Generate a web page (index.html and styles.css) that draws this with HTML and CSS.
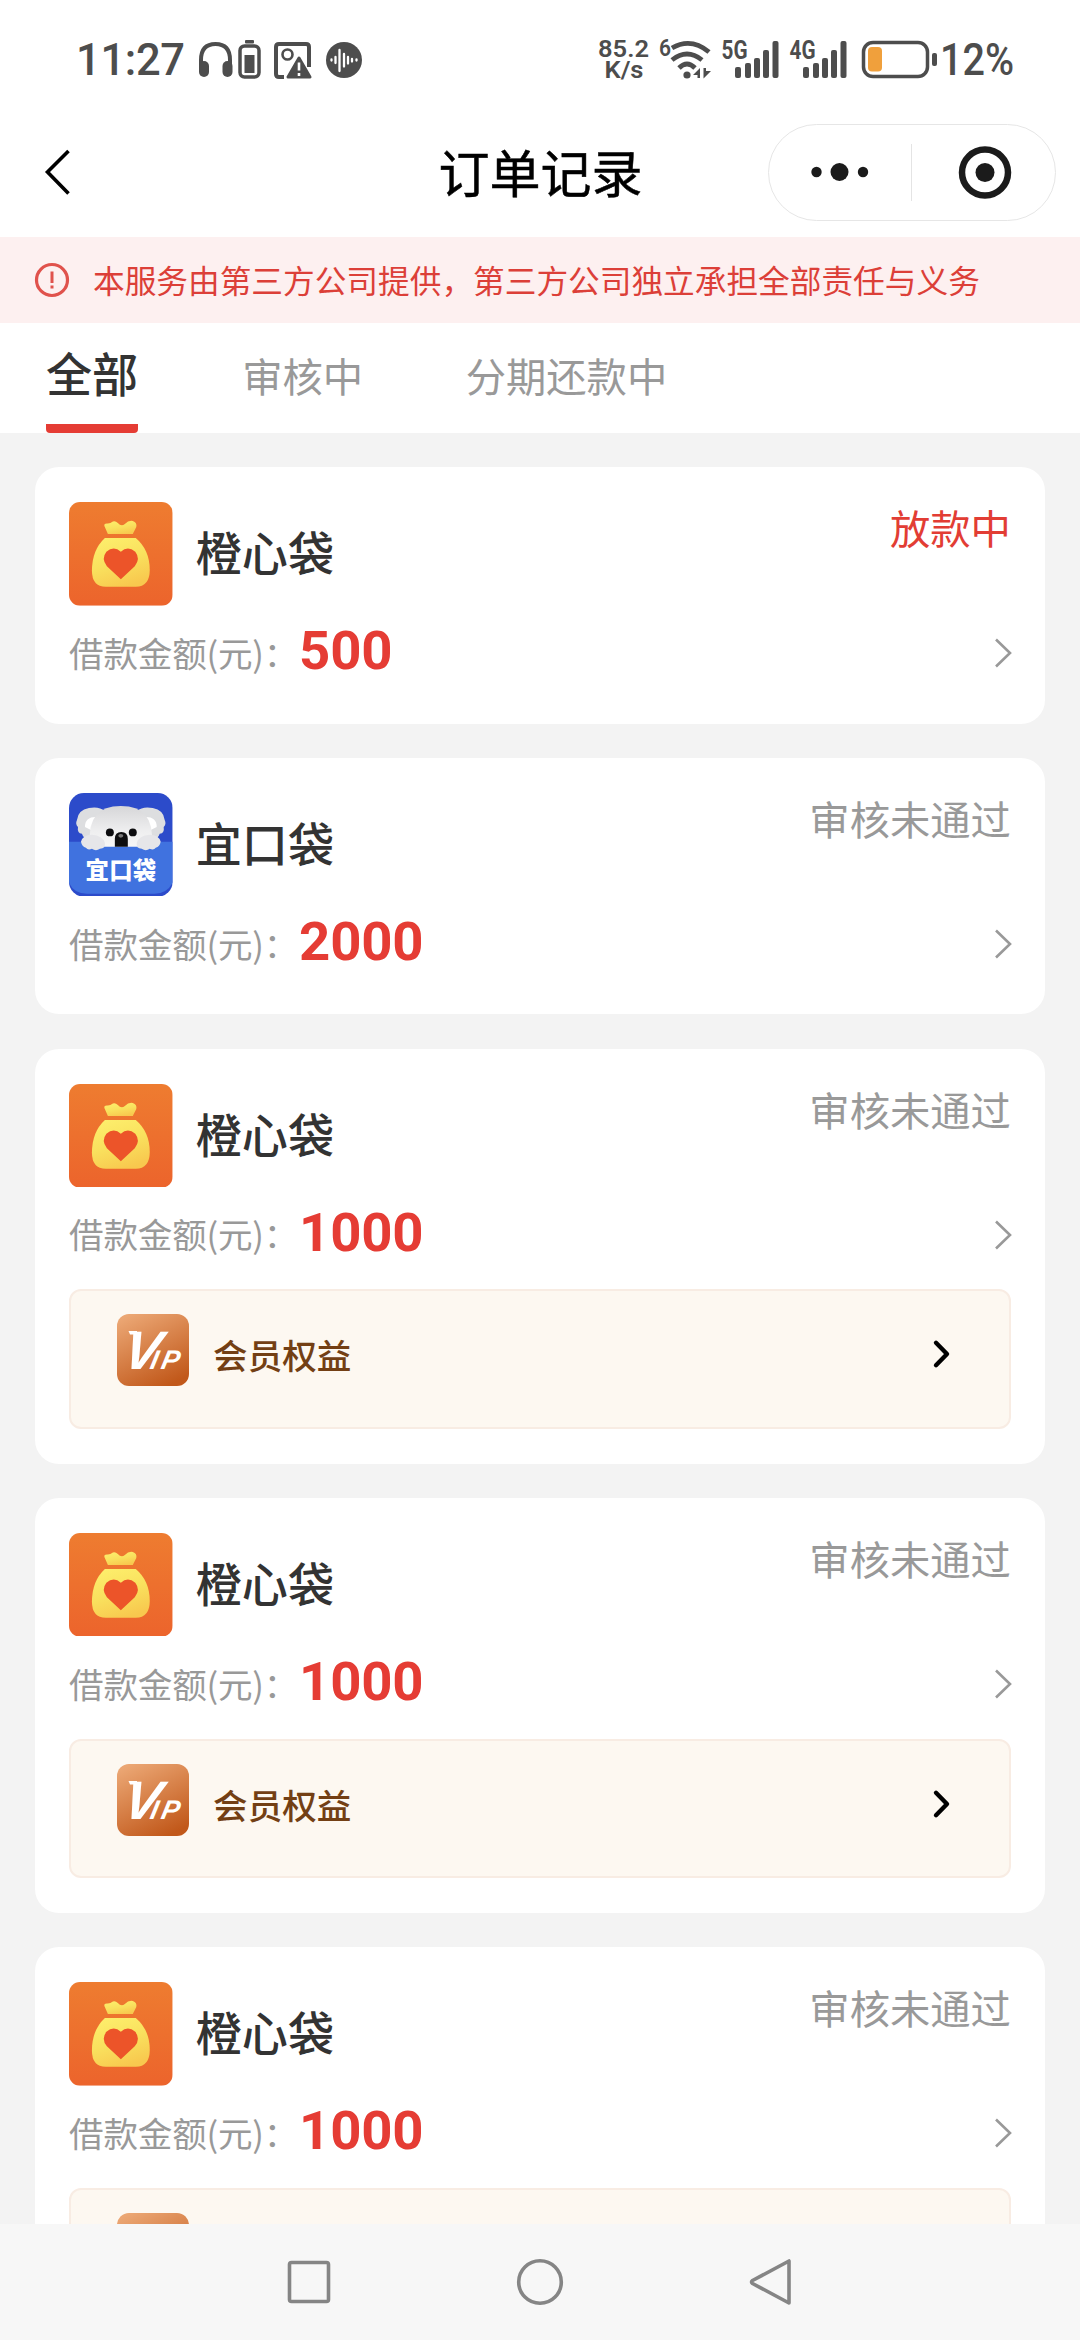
FILE: index.html
```html
<!DOCTYPE html>
<html lang="zh-CN">
<head>
<meta charset="utf-8">
<title>订单记录</title>
<link rel="stylesheet" href="styles.css">
</head>
<body>
<svg class="defs" width="0" height="0" aria-hidden="true">
  <defs>
    <linearGradient id="orange" x1="0" y1="0" x2="0" y2="1"><stop offset="0" stop-color="#ee7c30"/><stop offset="1" stop-color="#ec642c"/></linearGradient>
    <linearGradient id="gold" x1="0.2" y1="0" x2="0.6" y2="1"><stop offset="0" stop-color="#fdee6c"/><stop offset="0.5" stop-color="#f9e15e"/><stop offset="1" stop-color="#f8c84e"/></linearGradient>
    <linearGradient id="bronze" x1="0.2" y1="0" x2="0.7" y2="1"><stop offset="0" stop-color="#eba673"/><stop offset="1" stop-color="#c1581a"/></linearGradient>
    <linearGradient id="fur" x1="0" y1="0" x2="0" y2="1"><stop offset="0" stop-color="#d6d6d8"/><stop offset="0.6" stop-color="#eeeeef"/><stop offset="1" stop-color="#f7f7f7"/></linearGradient>
    <clipPath id="tile"><rect width="104" height="104" rx="15"/></clipPath>
  </defs>
  <symbol id="bag" viewBox="0 0 104 104">
    <rect width="104" height="104" rx="11" fill="url(#orange)"/>
    <path d="M39 32 L35.500 24 Q35 21.500 38 21.500 Q41 22 44 19.500 Q46.500 18.500 49 21 Q52.500 25 56 22 Q60 18 64 19 Q68.500 20.500 67.500 25 L64 32Z" fill="url(#gold)"/>
    <path d="M36 36 H67 Q81 48 81 68 Q81 85 67 85 H37 Q23 85 23 69 Q23 48 36 36Z" fill="url(#gold)"/>
    <path d="M52 77.500 L38 64.500 Q32 57 37.500 50 Q45 43.500 52 50 Q59 43.500 66.500 50 Q72 57 66 64.500Z" fill="#ec5429"/>
  </symbol>
  <symbol id="next" viewBox="0 0 20 32"><path d="M3 2.500 L17 16 L3 29.500" fill="none" stroke="#999" stroke-width="2.600"/></symbol>
  <symbol id="next-bold" viewBox="0 0 20 32"><path d="M4 4.800 L15 16 L4 27.200" fill="none" stroke="#000" stroke-width="4.400" stroke-linecap="round" stroke-linejoin="round"/></symbol>
</svg>

<div class="screen">
  <div class="status-bar">
    <div class="status-group">
      <svg width="112" height="80" viewBox="76 20 112 80"><text class="clock" x="76" y="75" textLength="109" lengthAdjust="spacing">11:27</text></svg>
      <svg width="48" height="80" viewBox="188 20 48 80"><path d="M201 68 V60 Q201 44 215.500 44 Q230 44 230 60 V68" fill="none" stroke="#4d4d4d" stroke-width="4"/><rect x="199" y="61" width="10" height="16" rx="5" fill="#4d4d4d"/><rect x="222.500" y="61" width="10" height="16" rx="5" fill="#4d4d4d"/></svg>
      <svg width="34" height="80" viewBox="236 20 34 80"><rect x="245" y="40" width="9" height="3.500" rx="1" fill="#4d4d4d"/><rect x="240" y="46" width="19" height="31" rx="4.500" fill="none" stroke="#4d4d4d" stroke-width="3.500"/><rect x="244.500" y="55" width="10" height="18" fill="#4d4d4d"/></svg>
      <svg width="50" height="80" viewBox="270 20 50 80"><path d="M284 77 H279 Q276 77 276 74 V47 Q276 44 279 44 H306 Q309 44 309 47 V67" fill="none" stroke="#4d4d4d" stroke-width="4"/><circle cx="287.500" cy="54.500" r="5" fill="none" stroke="#4d4d4d" stroke-width="2.600"/><path d="M299 58 L310 77 H288Z" fill="#4d4d4d" stroke="#4d4d4d" stroke-width="3" stroke-linejoin="round"/><path d="M299 62.500 V70.500 M299 73 V76" stroke="#fff" stroke-width="2.600"/></svg>
      <svg width="46" height="80" viewBox="320 20 46 80"><circle cx="344" cy="60" r="18" fill="#4d4d4d"/><path d="M331.500 59.500 v1 M335.500 57 v6 M339.500 50 v21 M344 54 v12.500 M348 57 v6.500 M352 59 v2.500 M356.500 59.500 v1" stroke="#fff" stroke-width="2.300" stroke-linecap="round"/></svg>
    </div>
    <div class="status-group status-right">
      <svg width="60" height="80" viewBox="597 20 60 80"><text class="speed" x="598" y="57" textLength="51" lengthAdjust="spacingAndGlyphs">85.2</text><text class="speed" x="604.500" y="78" textLength="39" lengthAdjust="spacingAndGlyphs">K/s</text></svg>
      <svg width="60" height="80" viewBox="657 20 60 80"><text class="net-six" x="659" y="55.500" textLength="12" lengthAdjust="spacingAndGlyphs">6</text><g fill="none" stroke="#4d4d4d" stroke-width="4.800"><path d="M672 48 Q691 37 709 52"/><path d="M672 60 Q687 48 702 60"/><path d="M679 68 Q687 60 695 68"/></g><circle cx="687" cy="75" r="3.600" fill="#4d4d4d"/><path d="M693 75 L700 68 V78 H697.500 V75Z M703.500 68 H706 V71 H711 L703.500 78.500Z" fill="#4d4d4d"/></svg>
      <svg width="67" height="80" viewBox="717 20 67 80"><text class="net" x="721.500" y="59" textLength="26" lengthAdjust="spacingAndGlyphs">5G</text><g fill="#4d4d4d"><rect x="735" y="67" width="6" height="11" rx="2"/><rect x="745" y="63" width="6" height="15" rx="2"/><rect x="754" y="58" width="6" height="20" rx="2"/><rect x="763" y="50" width="6" height="28" rx="2"/><rect x="772.500" y="41" width="6" height="37" rx="2"/></g></svg>
      <svg width="71" height="80" viewBox="784 20 71 80"><text class="net" x="789.500" y="59" textLength="26" lengthAdjust="spacingAndGlyphs">4G</text><g fill="#4d4d4d"><rect x="803" y="67" width="6" height="11" rx="2"/><rect x="813" y="63" width="6" height="15" rx="2"/><rect x="822" y="58" width="6" height="20" rx="2"/><rect x="831" y="50" width="6" height="28" rx="2"/><rect x="840.500" y="41" width="6" height="37" rx="2"/></g></svg>
      <svg width="84" height="80" viewBox="855 20 84 80"><rect x="863.500" y="42.500" width="64" height="34" rx="9.500" fill="none" stroke="#4d4d4d" stroke-width="3.500"/><rect x="868" y="47" width="14" height="24.500" rx="4" fill="#f0a03c"/><rect x="932" y="53" width="5" height="13" rx="2" fill="#4d4d4d"/></svg>
      <svg width="90" height="80" viewBox="939 20 90 80"><text class="clock" x="940" y="75" textLength="74" lengthAdjust="spacingAndGlyphs">12%</text></svg>
    </div>
  </div>

  <header class="nav">
    <svg class="back" width="32" height="52" viewBox="42 146 32 52"><path d="M68.500 151 L47.500 172 L68.500 193.500" fill="none" stroke="#000" stroke-width="3.600"/></svg>
    <h1 class="title">订单记录</h1>
    <div class="capsule">
      <svg width="142" height="96" viewBox="768 124 142 96"><g fill="#1b1b1b"><circle cx="815.500" cy="172" r="5.200"/><circle cx="838.500" cy="172" r="9"/><circle cx="862" cy="172" r="5.200"/></g></svg>
      <span class="capsule-line"></span>
      <svg width="142" height="96" viewBox="912 124 142 96"><circle cx="985" cy="172.500" r="23" fill="none" stroke="#1b1b1b" stroke-width="6.500"/><circle cx="985" cy="172.500" r="9.500" fill="#1b1b1b"/></svg>
    </div>
  </header>

  <div class="notice">
    <svg width="36" height="36" viewBox="0 0 36 36"><circle cx="18" cy="18" r="15.500" fill="none" stroke="#e0524c" stroke-width="3.200"/><path d="M18 9.500 V21 M18 23.500 V26.500" stroke="#e0524c" stroke-width="3"/></svg>
    <span class="notice-text">本服务由第三方公司提供，第三方公司独立承担全部责任与义务</span>
  </div>

  <nav class="tabs">
    <span class="tab tab-active">全部</span>
    <span class="tab">审核中</span>
    <span class="tab">分期还款中</span>
  </nav>

  <main class="orders">
    <section class="card">
      <div class="card-head"><svg class="logo"><use href="#bag"/></svg><h2 class="name">橙心袋</h2><span class="status status-paying">放款中</span></div>
      <div class="amount-row"><span class="label">借款金额(元)：</span><b class="amount">500</b><svg class="next"><use href="#next"/></svg></div>
    </section>
    <section class="card">
      <div class="card-head">
        <svg class="logo" viewBox="0 0 104 104">
          <g clip-path="url(#tile)">
            <rect width="104" height="104" fill="#2c4bca"/>
            <path d="M0 49 H104 V90 Q98 101 86 101 H18 Q5 101 0 90Z" fill="#4072df"/>
            <path d="M36 18 Q30 13 20 15 Q9 17 8 27 Q6 31 9 34 Q8 40 13 41 Q15 48 24 47 L36 46Z M68 18 Q74 13 84 15 Q95 17 96 27 Q98 31 95 34 Q96 40 91 41 Q89 48 80 47 L68 46Z" fill="#dddee0"/>
            <path d="M16 34 Q16 24 27 24 L24 38Z M88 34 Q88 24 77 24 L80 38Z" fill="#fff"/>
            <path d="M21 50 Q18 13 52 13 Q86 13 83 50 L75 54 H29Z" fill="url(#fur)"/>
            <path d="M12 49 Q14 42 23 42 Q34 43 36 50 Q37 56 31 56 Q27 59 23 56 Q19 58 17 55 Q13 54 12 49Z M92 49 Q90 42 81 42 Q70 43 68 50 Q67 56 73 56 Q77 59 81 56 Q85 58 87 55 Q91 54 92 49Z" fill="#e6e6e9"/>
            <circle cx="41" cy="39.500" r="4" fill="#0d0d0f"/><circle cx="64" cy="39.500" r="4" fill="#0d0d0f"/>
            <path d="M46 54 V46 Q46 39 52.500 39 Q59 39 59 46 V54Z" fill="#0d0d0f"/>
            <ellipse cx="52" cy="43" rx="2.500" ry="1.800" fill="#777"/>
            <text class="koala-text" x="16.500" y="86" textLength="71" lengthAdjust="spacing">宜口袋</text>
          </g>
        </svg>
        <h2 class="name">宜口袋</h2><span class="status">审核未通过</span>
      </div>
      <div class="amount-row"><span class="label">借款金额(元)：</span><b class="amount">2000</b><svg class="next"><use href="#next"/></svg></div>
    </section>
    <section class="card">
      <div class="card-head"><svg class="logo"><use href="#bag"/></svg><h2 class="name">橙心袋</h2><span class="status">审核未通过</span></div>
      <div class="amount-row"><span class="label">借款金额(元)：</span><b class="amount">1000</b><svg class="next"><use href="#next"/></svg></div>
      <div class="member">
        <svg class="vip" viewBox="0 0 72 72"><rect width="72" height="72" rx="12" fill="url(#bronze)"/><path d="M11.500 17 H20 V20.500 H13Z" fill="#fff"/><g transform="translate(0 55) skewX(-12)"><text class="vip-text" y="0"><tspan x="4">V</tspan><tspan class="vip-small" x="32 43">IP</tspan></text></g></svg>
        <span class="member-text">会员权益</span><svg class="next"><use href="#next-bold"/></svg>
      </div>
    </section>
    <section class="card">
      <div class="card-head"><svg class="logo"><use href="#bag"/></svg><h2 class="name">橙心袋</h2><span class="status">审核未通过</span></div>
      <div class="amount-row"><span class="label">借款金额(元)：</span><b class="amount">1000</b><svg class="next"><use href="#next"/></svg></div>
      <div class="member">
        <svg class="vip" viewBox="0 0 72 72"><rect width="72" height="72" rx="12" fill="url(#bronze)"/><path d="M11.500 17 H20 V20.500 H13Z" fill="#fff"/><g transform="translate(0 55) skewX(-12)"><text class="vip-text" y="0"><tspan x="4">V</tspan><tspan class="vip-small" x="32 43">IP</tspan></text></g></svg>
        <span class="member-text">会员权益</span><svg class="next"><use href="#next-bold"/></svg>
      </div>
    </section>
    <section class="card">
      <div class="card-head"><svg class="logo"><use href="#bag"/></svg><h2 class="name">橙心袋</h2><span class="status">审核未通过</span></div>
      <div class="amount-row"><span class="label">借款金额(元)：</span><b class="amount">1000</b><svg class="next"><use href="#next"/></svg></div>
      <div class="member"><svg class="vip" viewBox="0 0 72 72"><rect width="72" height="72" rx="12" fill="url(#bronze)"/></svg></div>
    </section>
  </main>

  <footer class="system-nav">
    <svg width="50" height="50" viewBox="0 0 50 50"><rect x="5.500" y="5.500" width="39" height="39" rx="2" fill="none" stroke="#858585" stroke-width="3.600"/></svg>
    <svg width="50" height="50" viewBox="0 0 50 50"><circle cx="25" cy="25" r="21.300" fill="none" stroke="#858585" stroke-width="3.600"/></svg>
    <svg width="50" height="50" viewBox="0 0 50 50"><path d="M43 4 V46 L6.500 26.500 Q4.500 25 6.500 23.500Z" fill="none" stroke="#858585" stroke-width="3.600" stroke-linejoin="round"/></svg>
  </footer>
</div>
</body>
</html>
```
FILE: styles.css
```css
* { box-sizing: border-box; }

body {
  margin: 0;
  overflow: hidden;
  font-family: "Noto Sans CJK SC", sans-serif;
  color: #333;
}

svg { display: block; flex: none; }
.defs { height: 0; }
h1, h2 { margin: 0; }

.screen {
  display: flex;
  flex-direction: column;
  width: 1080px;
  height: 2340px;
  background: #fff;
}

/* system status bar */
.status-bar {
  flex: none;
  display: flex;
  justify-content: space-between;
  height: 107px;
  padding: 20px 51px 0 76px;
}
.status-group { display: flex; }
.clock, .speed, .net, .net-six { font-family: Roboto, sans-serif; fill: #4d4d4d; }
.clock { font-size: 43.500px; font-weight: 500; }
.speed { font-size: 24px; font-weight: 600; }
.net { font-size: 25px; font-weight: 700; }
.net-six { font-size: 24px; font-weight: 600; }

/* page header */
.nav {
  flex: none;
  display: grid;
  grid-template-columns: 1fr auto 1fr;
  align-items: center;
  height: 130px;
  padding: 0 24px 0 42px;
}
.title {
  padding: 0 17px 3px 0;
  font-size: 51px;
  font-weight: 400;
  line-height: 70px;
  color: #000;
  -webkit-text-stroke: 0.5px #000;
}
.capsule {
  justify-self: end;
  display: flex;
  align-items: center;
  width: 288px;
  height: 97px;
  border: 1.500px solid #e6e6e6;
  border-radius: 49px;
}
.capsule-line { width: 1px; height: 57px; background: #e4e4e4; }

.notice {
  flex: none;
  display: flex;
  align-items: center;
  gap: 23px;
  height: 86px;
  padding-left: 34px;
  background: #fdf0f0;
  font-size: 31.680px;
  color: #dc3f38;
}
.notice-text { padding-bottom: 3px; }

.tabs {
  flex: none;
  display: flex;
  gap: 104px;
  height: 110px;
  padding-left: 46px;
  background: #fff;
}
.tab { height: 110px; font-size: 40.320px; line-height: 104px; color: #999; }
.tab-active {
  font-size: 46.080px;
  line-height: 99px;
  color: #333;
  font-weight: 500;
  background: linear-gradient(#e53c34, #e53c34) bottom / 100% 9px no-repeat;
  border-radius: 4px;
}
.tab + .tab + .tab { margin-left: -1.500px; }

.orders {
  flex: 1;
  min-height: 0;
  overflow: hidden;
  display: flex;
  flex-direction: column;
  gap: 34.560px;
  padding: 34.300px 34.560px 0;
  background: #f3f3f3;
}

.card {
  flex: none;
  padding: 34.560px;
  border-radius: 24px;
  background: #fff;
}
.card-head { display: flex; height: 103.680px; }
.logo { width: 103.680px; height: 103.680px; }
.name {
  margin-left: 23px;
  font-size: 46.080px;
  font-weight: 500;
  line-height: 99px;
}
.status {
  margin-left: auto;
  font-size: 40.320px;
  line-height: 49px;
  color: #999;
}
.status-paying { color: #e23d34; }

.amount-row {
  display: flex;
  align-items: center;
  height: 83.520px;
  padding-top: 12px;
}
.label {
  width: 230px;
  padding-bottom: 3px;
  font-size: 34.560px;
  line-height: 50px;
  letter-spacing: -0.200px;
  white-space: nowrap;
  color: #999;
}
.amount {
  font-family: Roboto, sans-serif;
  font-size: 54.500px;
  font-weight: 700;
  line-height: 60px;
  letter-spacing: -0.200px;
  color: #e53c34;
  transform: translateY(-3px);
}
.next { width: 20px; height: 32px; margin-left: auto; margin-right: -2px; }

.member {
  display: flex;
  height: 139.800px;
  margin-top: 18.600px;
  padding: 23px 57px 0 46px;
  border: 2px solid #f8ece3;
  border-radius: 12px;
  background: #fdf8f1;
}
.vip { width: 72px; height: 72px; }
.member-text {
  margin-left: 24px;
  font-size: 34.560px;
  font-weight: 500;
  line-height: 81px;
  color: #733f14;
}
.member .next { margin-top: 24px; margin-right: 0; }

.koala-text { font-family: "Noto Sans CJK SC", sans-serif; font-size: 23.500px; font-weight: 900; fill: #fff; }
.vip-text { font-family: "Liberation Sans", sans-serif; font-size: 54px; font-weight: 700; font-style: italic; fill: #fff; }
.vip-small { font-size: 27px; }

/* system navigation */
.system-nav {
  flex: none;
  display: flex;
  justify-content: center;
  align-items: center;
  gap: 181px;
  height: 116px;
  background: #f7f7f7;
}
```
